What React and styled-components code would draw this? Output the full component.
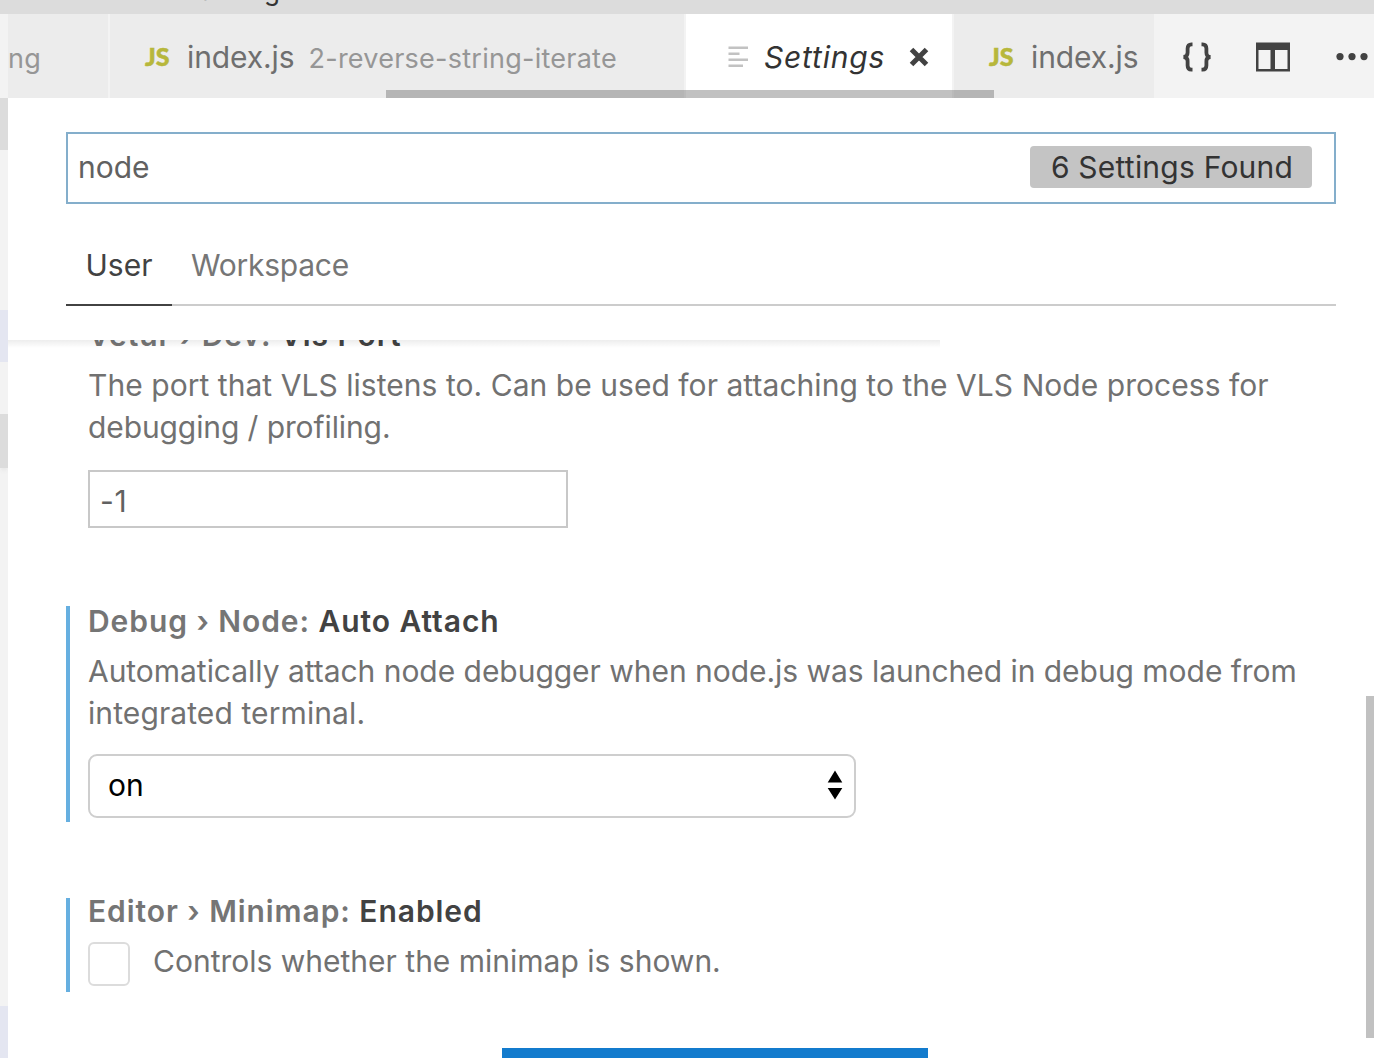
import React from "react";
import styled, { createGlobalStyle, css } from "styled-components";

const GlobalStyle = createGlobalStyle`
  * { box-sizing: border-box; }
  body {
    margin: 0;
    background: #fff;
    font-family: Inter, "Liberation Sans", sans-serif;
    overflow: hidden;
  }
`;

const Window = styled.div`
  display: flex;
  flex-direction: column;
  width: 1374px;
  height: 1058px;
  overflow: hidden;
  background: #fff;
`;

const TitleBar = styled.header`
  flex: none;
  display: flex;
  align-items: flex-end;
  height: 14px;
  padding: 0 0 10px 197px;
  overflow: hidden;
  background: #dcdcdc;
  color: #333;
  font-size: 26px;
  line-height: 26px;
  letter-spacing: -0.5px;
  white-space: nowrap;
`;

const Workbench = styled.div`
  flex: 1;
  display: flex;
  min-height: 0;
`;

const SideBar = styled.aside`
  flex: none;
  display: flex;
  flex-direction: column;
  width: 8px;
  padding-top: 84px;
  overflow: hidden;
  background: #f3f3f3;
`;

const SideRow = styled.div`
  flex: none;
  height: ${(p) => p.$height}px;
  background: ${(p) => p.$color || "transparent"};
  ${(p) => p.$shadow && css`box-shadow: 0 4px 5px -2px #dddddd;`}
`;

const Editor = styled.main`
  flex: 1;
  display: flex;
  flex-direction: column;
  min-width: 0;
`;

const TabBar = styled.nav`
  position: relative;
  flex: none;
  display: flex;
  height: 84px;
  background: #f3f3f3;
`;

const Tab = styled.div`
  flex: none;
  display: flex;
  align-items: center;
  width: ${(p) => p.$width}px;
  padding: 2px 0 0 ${(p) => p.$pad}px;
  border-right: ${(p) => (p.$last ? 0 : 2)}px solid #f3f3f3;
  background: ${(p) => (p.$active ? "#fff" : "#ececec")};
  white-space: nowrap;
  overflow: hidden;
`;

const JsIcon = styled.span`
  flex: none;
  width: 42px;
  padding-bottom: 3px;
  font: 900 25px/30px Lato, sans-serif;
  color: #b7b73b;
  -webkit-text-stroke: 0.5px #b7b73b;
`;

const TabName = styled.span`
  color: ${(p) => (p.$active ? "#333" : "#6f6f6f")};
  margin-left: ${(p) => (p.$active ? 15 : 0)}px;
  font-size: 30px;
  line-height: 36px;
  font-style: ${(p) => (p.$active ? "italic" : "normal")};
  letter-spacing: ${(p) => (p.$active ? 0.8 : -0.1)}px;
`;

const TabPath = styled.span`
  padding-top: 3px;
  margin-left: ${(p) => p.$gap || 0}px;
  color: #969696;
  font-size: 27px;
  line-height: 36px;
  letter-spacing: 0.25px;
`;

const TabScroll = styled.div`
  position: absolute;
  left: 378px;
  bottom: 0;
  width: 608px;
  height: 8px;
  background: rgba(100, 100, 100, 0.4);
`;

const Actions = styled.div`
  flex: 1;
  display: flex;
  align-items: center;
  padding: 2px 0 0 28px;
`;

const Icon = styled.svg`
  flex: none;
  display: block;
  margin-left: ${(p) => p.$gap || 0}px;
`;

const SearchBox = styled.div`
  flex: none;
  display: flex;
  align-items: center;
  justify-content: space-between;
  height: 72px;
  margin: 34px 38px 0 58px;
  padding: 0 22px 2px 10px;
  border: 2px solid #84aecb;
  color: #616161;
  font-size: 30px;
`;

const Count = styled.span`
  display: flex;
  align-items: center;
  justify-content: center;
  width: 282px;
  height: 42px;
  padding-left: 2px;
  border-radius: 4px;
  background: #c4c4c4;
  color: #333;
  letter-spacing: 0.22px;
`;

const Scopes = styled.div`
  flex: none;
  display: flex;
  height: 76px;
  margin: 26px 38px 0 58px;
  border-bottom: 2px solid #ccc;
`;

const Scope = styled.div`
  flex: none;
  width: ${(p) => p.$width}px;
  height: 76px;
  padding-left: ${(p) => (p.$active ? 19.5 : 19)}px;
  border-bottom: 2px solid ${(p) => (p.$active ? "#424242" : "transparent")};
  color: ${(p) => (p.$active ? "#424242" : "#767676")};
  font-size: 30px;
  line-height: 70px;
  letter-spacing: ${(p) => (p.$active ? 0 : -0.25)}px;
  white-space: nowrap;
`;

const SettingsList = styled.section`
  position: relative;
  flex: 1;
  min-height: 0;
  margin-top: 34px;
  overflow: hidden;
`;

const TopShadow = styled.div`
  position: absolute;
  top: 0;
  left: 0;
  width: 932px;
  height: 8px;
  background: linear-gradient(rgba(0, 0, 0, 0.07), rgba(0, 0, 0, 0));
`;

const ScrollThumb = styled.div`
  position: absolute;
  top: 356px;
  right: 0;
  width: 8px;
  height: 342px;
  background: #c1c1c1;
`;

const Item = styled.article`
  height: ${(p) => p.$height}px;
  margin: ${(p) => p.$top}px 0 0 58px;
  padding-left: 18px;
  border-left: 4px solid ${(p) => (p.$modified ? "#66afe0" : "transparent")};
  white-space: nowrap;
`;

const Heading = styled.h2`
  margin: 0;
  color: #424242;
  font-size: 30px;
  line-height: ${(p) => (p.$compact ? 26 : 30)}px;
  font-weight: 600;
  letter-spacing: 0.93px;
`;

const Category = styled.span`
  color: #757575;
`;

const Description = styled.p`
  margin: ${(p) => (p.$inline ? -2 : 14)}px 0 0;
  color: #717171;
  font-size: 30px;
  line-height: 42px;
  letter-spacing: ${(p) => p.$spacing || 0}px;
`;

const Line = styled.span`
  display: block;
  letter-spacing: ${(p) => p.$spacing}px;
`;

const NumberField = styled.div`
  width: 480px;
  height: 58px;
  margin-top: 22px;
  padding: 2px 10px;
  border: 2px solid #c8c8c8;
  color: #616161;
  font-size: 30px;
  line-height: 54px;
  letter-spacing: 0.8px;
`;

const Select = styled.div`
  display: flex;
  align-items: center;
  justify-content: space-between;
  width: 768px;
  height: 64px;
  margin-top: 20px;
  padding: 0 11px 3px 18px;
  border: 2px solid #cecece;
  border-radius: 9px;
  color: #000;
  font-size: 30px;
`;

const CheckRow = styled.div`
  display: flex;
  margin-top: 18px;
`;

const CheckBox = styled.span`
  width: 42px;
  height: 44px;
  margin-right: 23px;
  border: 2px solid #dcdcdc;
  border-radius: 6px;
`;

const BottomButton = styled.div`
  width: 426px;
  height: 60px;
  margin: 56px 0 0 494px;
  background: #137bcd;
`;

function PreferencesIcon() {
  return (
    <Icon width="21" height="22" viewBox="0 0 21 22" fill="#c2c2c2">
      <path d="M0.5 0.5h19.5v2.6H0.5zM0.5 6.5h11v2.6H0.5zM0.5 12.5h19.5v2.6H0.5zM0.5 18.5h14.5v2.6H0.5z" />
    </Icon>
  );
}

function CloseIcon() {
  return (
    <Icon $gap={24} width="20" height="20" viewBox="0 0 20 20">
      <path d="M2.5 2.5L17.5 17.5M17.5 2.5L2.5 17.5" stroke="#424242" strokeWidth="5" />
    </Icon>
  );
}

function BracesIcon() {
  return (
    <Icon width="30" height="30" viewBox="0 0 30 30" fill="none" stroke="#424242" strokeWidth="3.8">
      <path d="M10.5 2.4H9.5Q5.6 2.4 5.6 6.5V10.5Q5.6 15 1.4 15Q5.6 15 5.6 19.5V23.5Q5.6 27.6 9.5 27.6H10.5" />
      <path d="M19.5 2.4H20.5Q24.4 2.4 24.4 6.5V10.5Q24.4 15 28.6 15Q24.4 15 24.4 19.5V23.5Q24.4 27.6 20.5 27.6H19.5" />
    </Icon>
  );
}

function SplitIcon() {
  return (
    <Icon $gap={44} width="34" height="30" viewBox="0 0 34 30">
      <path fill="#424242" fillRule="evenodd" d="M0 0.5h34v29H0zM2.5 8v19h12V8zM19 8v19h12.5V8z" />
    </Icon>
  );
}

function MoreIcon() {
  return (
    <Icon $gap={46} width="32" height="8" viewBox="0 0 32 8" fill="#424242">
      <circle cx="4" cy="3.6" r="3.6" />
      <circle cx="16" cy="3.6" r="3.6" />
      <circle cx="28" cy="3.6" r="3.6" />
    </Icon>
  );
}

function SelectArrows() {
  return (
    <Icon width="16" height="30" viewBox="0 0 16 30">
      <path d="M8 0.6L15.3 12.4H0.7zM8 29.6L15.3 18H0.7z" />
    </Icon>
  );
}

export default function App() {
  return (
    <>
      <GlobalStyle />
      <Window>
        <TitleBar>Settings — reverse-iterate</TitleBar>
        <Workbench>
          <SideBar>
            <SideRow $height={52} $color="#dcdcdc" />
            <SideRow $height={160} />
            <SideRow $height={52} $color="#e4e6f1" />
            <SideRow $height={52} />
            <SideRow $height={54} $color="#dcdcdc" $shadow />
            <SideRow $height={538} />
            <SideRow $height={52} $color="#e4e6f1" />
          </SideBar>
          <Editor>
            <TabBar>
              <Tab $width={102} $pad={0}>
                <TabPath>ng</TabPath>
              </Tab>
              <Tab $width={576} $pad={35}>
                <JsIcon>JS</JsIcon>
                <TabName>index.js</TabName>
                <TabPath $gap={14}>2-reverse-string-iterate</TabPath>
              </Tab>
              <Tab $width={268} $pad={42} $active>
                <PreferencesIcon />
                <TabName $active>Settings</TabName>
                <CloseIcon />
              </Tab>
              <Tab $width={200} $pad={35} $last>
                <JsIcon>JS</JsIcon>
                <TabName>index.js</TabName>
              </Tab>
              <Actions>
                <BracesIcon />
                <SplitIcon />
                <MoreIcon />
              </Actions>
              <TabScroll />
            </TabBar>
            <SearchBox>
              <span>node</span>
              <Count>6 Settings Found</Count>
            </SearchBox>
            <Scopes>
              <Scope $width={106} $active>User</Scope>
              <Scope $width={200}>Workspace</Scope>
            </Scopes>
            <SettingsList>
              <Item $top={-20} $height={208}>
                <Heading>
                  <Category>Vetur › Dev: </Category>Vls Port
                </Heading>
                <Description>
                  <Line $spacing={0.045}>
                    The port that VLS listens to. Can be used for attaching to the VLS Node process for
                  </Line>
                  <Line $spacing={-0.1}>debugging / profiling.</Line>
                </Description>
                <NumberField>-1</NumberField>
              </Item>
              <Item $top={78} $height={216} $modified>
                <Heading>
                  <Category>Debug › Node: </Category>Auto Attach
                </Heading>
                <Description>
                  <Line $spacing={-0.035}>
                    Automatically attach node debugger when node.js was launched in debug mode from
                  </Line>
                  <Line $spacing={0.1}>integrated terminal.</Line>
                </Description>
                <Select>
                  <span>on</span>
                  <SelectArrows />
                </Select>
              </Item>
              <Item $top={76} $height={94} $modified>
                <Heading $compact>
                  <Category>Editor › Minimap: </Category>Enabled
                </Heading>
                <CheckRow>
                  <CheckBox />
                  <Description $inline>Controls whether the minimap is shown.</Description>
                </CheckRow>
              </Item>
              <BottomButton />
              <TopShadow />
              <ScrollThumb />
            </SettingsList>
          </Editor>
        </Workbench>
      </Window>
    </>
  );
}
